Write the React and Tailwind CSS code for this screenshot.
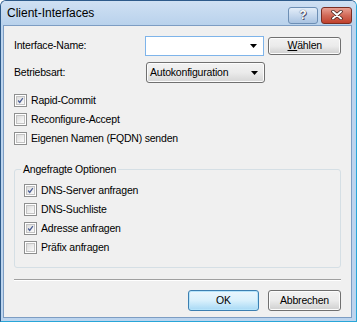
import React from 'react';

// Win7 style checkbox
const CheckBox = ({ checked, label }) => (
  <div className="flex items-center h-[19px]">
    <div className="w-[13px] h-[13px] border border-[#8e8f8f] bg-white p-[1px]">
      <div className="w-full h-full border border-[#c3c3c3] bg-gradient-to-br from-[#dcdcdc] to-[#fbfbfb] flex items-center justify-center">
        {checked && (
          <svg width="9" height="9" viewBox="0 0 9 9">
            <path d="M1.5 4.5 L3.5 7 L7.5 1.5" fill="none" stroke="#4b5e94" strokeWidth="1.6" />
          </svg>
        )}
      </div>
    </div>
    <span className="ml-[4px] text-[10.5px] tracking-[-0.2px] text-black leading-none">{label}</span>
  </div>
);

const Arrow = () => (
  <svg width="7" height="4" viewBox="0 0 7 4">
    <path d="M0 0 H7 L3.5 4 Z" fill="#000" />
  </svg>
);

const Button = ({ children, primary, className = '' }) => (
  <div
    className={
      'flex items-center justify-center rounded-[3px] border text-[10.5px] tracking-[-0.2px] text-black ' +
      (primary
        ? 'border-[#3c7fb1] bg-gradient-to-b from-[#eaf6fd] via-[#d9f0fc] to-[#a7d9f5] shadow-[inset_0_0_0_1px_#b6e4fb] '
        : 'border-[#707070] bg-gradient-to-b from-[#f2f2f2] via-[#ebebeb] to-[#cfcfcf] shadow-[inset_0_0_0_1px_#fcfcfc] ') +
      className
    }
  >
    {children}
  </div>
);

export default function App() {
  return (
    <div className="w-[357px] h-[322px] font-['Liberation_Sans',Arial,sans-serif] bg-[#bcd4ee] border border-[#2d5a8a] border-r-[#28a6d8] border-b-[#28a6d8] rounded-t-[6px] flex flex-col overflow-hidden">
      {/* Title bar */}
      <div className="h-[24px] shrink-0 flex items-center bg-gradient-to-b from-[#cfe0f3] to-[#b9d2ec] pl-[6px] pr-[4px]">
        <span className="text-[12px] text-black">Client-Interfaces</span>
        <div className="ml-auto flex items-center gap-[3px] mt-[4px]">
          <div className="w-[30px] h-[17px] rounded-[3px] border border-[#6d8fb5] bg-gradient-to-b from-[#e3edf8] via-[#c6d8ed] to-[#a9c3e1] flex items-center justify-center text-[12px] font-bold text-white [text-shadow:0_0_1px_#334,1px_1px_0_#557]">
            ?
          </div>
          <div className="w-[31px] h-[17px] rounded-[3px] border border-[#7a2d22] bg-gradient-to-b from-[#e8a093] via-[#d16a58] to-[#c0402c] flex items-center justify-center">
            <svg width="12" height="10" viewBox="0 0 12 10">
              <path d="M2 1.5 L10 8.5 M10 1.5 L2 8.5" stroke="#3d1a14" strokeWidth="3.4" strokeLinecap="round" />
              <path d="M2 1.5 L10 8.5 M10 1.5 L2 8.5" stroke="#ffffff" strokeWidth="2" strokeLinecap="round" />
            </svg>
          </div>
        </div>
      </div>

      {/* Client area */}
      <div className="flex-1 ml-[2px] mr-[4px] mb-[3px] bg-[#f0f0f0] border border-[#7d9dc3] px-[10px] pt-[10px] flex flex-col">
        {/* Interface-Name */}
        <div className="flex items-center h-[20px]">
          <span className="w-[132px] text-[10.5px] tracking-[-0.2px] text-black">Interface-Name:</span>
          <div className="w-[120px] h-[20px] bg-white border border-[#7eb4ea] flex items-center justify-end pr-[6px]">
            <Arrow />
          </div>
          <Button className="ml-[4px] w-[73px] h-[18px]">
            <span><span className="underline">W</span>ählen</span>
          </Button>
        </div>

        {/* Betriebsart */}
        <div className="flex items-center h-[21px] mt-[6px]">
          <span className="w-[132px] text-[10.5px] tracking-[-0.2px] text-black">Betriebsart:</span>
          <div className="w-[119px] h-[21px] rounded-[3px] border border-[#707070] bg-gradient-to-b from-[#f2f2f2] via-[#ebebeb] to-[#d5d5d5] shadow-[inset_0_0_0_1px_#fcfcfc] flex items-center pl-[3px] pr-[6px] text-[10.5px] tracking-[-0.2px] text-black">
            Autokonfiguration
            <span className="ml-auto"><Arrow /></span>
          </div>
        </div>

        {/* Options */}
        <div className="mt-[8px] flex flex-col">
          <CheckBox checked label="Rapid-Commit" />
          <CheckBox label="Reconfigure-Accept" />
          <CheckBox label="Eigenen Namen (FQDN) senden" />
        </div>

        {/* Group box */}
        <div className="relative mt-[21px] h-[99px] border border-[#d5dfe5] rounded-[3px] pl-[9px] pt-[11px]">
          <span className="absolute left-[6px] -top-[6px] bg-[#f0f0f0] px-[2px] text-[10.5px] tracking-[-0.2px] text-black leading-none">
            Angefragte Optionen
          </span>
          <CheckBox checked label="DNS-Server anfragen" />
          <CheckBox label="DNS-Suchliste" />
          <CheckBox checked label="Adresse anfragen" />
          <CheckBox label="Präfix anfragen" />
        </div>

        {/* Separator */}
        <div className="mt-[11px] border-t border-[#a0a0a0] border-b border-b-white" />

        {/* Buttons */}
        <div className="mt-[9px] flex justify-end gap-[9px]">
          <Button primary className="w-[71px] h-[21px]">OK</Button>
          <Button className="w-[73px] h-[21px]">Abbrechen</Button>
        </div>
      </div>
    </div>
  );
}
